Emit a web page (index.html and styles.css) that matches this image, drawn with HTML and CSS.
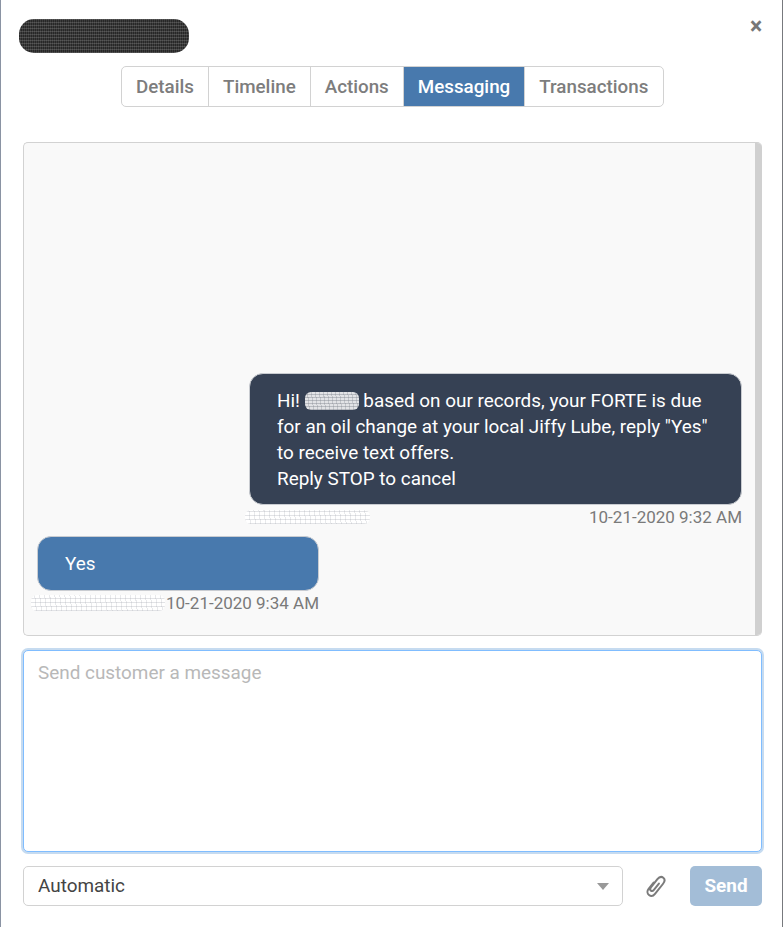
FILE: index.html
```html
<!DOCTYPE html>
<html lang="en">
<head>
    <meta charset="UTF-8">
    <meta name="viewport" content="width=device-width, initial-scale=1.0">
    <title>Messaging</title>
    <link rel="stylesheet" href="styles.css">
</head>
<body>
    <div class="modal">
        <div class="modal-header">
            <div class="name-blob"></div>
            <button class="close-button">&times;</button>
        </div>
        <div class="tabs">
            <a class="tab">Details</a>
            <a class="tab">Timeline</a>
            <a class="tab">Actions</a>
            <a class="tab active">Messaging</a>
            <a class="tab">Transactions</a>
        </div>
        <div class="thread-panel">
            <div class="thread">
                <div class="message outgoing">
                    <div class="bubble bubble-dark">Hi! <span class="smudge smudge-name"></span> based on our records, your FORTE is due for an oil change at your local Jiffy Lube, reply "Yes" to receive text offers.<br>Reply STOP to cancel</div>
                    <div class="message-meta">
                        <span class="smudge smudge-sender"></span>
                        <span>10-21-2020 9:32 AM</span>
                    </div>
                </div>
                <div class="message incoming">
                    <div class="bubble bubble-blue">Yes</div>
                    <div class="message-meta">
                        <span class="smudge smudge-phone"></span>
                        <span>10-21-2020 9:34 AM</span>
                    </div>
                </div>
            </div>
            <div class="scrollbar"></div>
        </div>
        <textarea class="composer" placeholder="Send customer a message"></textarea>
        <div class="composer-actions">
            <div class="select-wrap">
                <select class="send-mode">
                    <option>Automatic</option>
                </select>
                <span class="select-arrow"></span>
            </div>
            <button class="attach-button" aria-label="Attach">
                <svg width="24" height="24" viewBox="0 0 24 24" fill="none" stroke="#7b7b7b" stroke-width="2" stroke-linecap="round">
                    <path d="M9.6 8.6 L4.6 14.8 C2.9 17 3.2 19.6 5 21 C6.8 22.4 9.3 22 11 19.9 L18.9 10 C20.9 7.5 21 5.1 19.3 3.7 C17.6 2.4 15.2 2.9 13.4 5.2 L6.9 13.4 C6 14.6 6 15.9 6.9 16.6 C7.8 17.3 9 17 9.9 15.9 L14.9 9.6"/>
                </svg>
            </button>
            <button class="send-button">Send</button>
        </div>
    </div>
</body>
</html>
```

FILE: styles.css
```css
* {
    box-sizing: border-box;
}

html, body {
    margin: 0;
    height: 100%;
    background: #fff;
    overflow: hidden;
}

body {
    font-family: Roboto, "Liberation Sans", sans-serif;
    font-size: 18.9px;
    color: #444;
}

.modal {
    width: 783px;
    height: 927px;
    padding: 0 20px 0 22px;
    border-left: 1px solid #8a93a3;
    border-right: 1px solid #77797d;
}

.modal-header {
    display: flex;
    justify-content: space-between;
    align-items: flex-start;
    padding-top: 19px;
    height: 66px;
}

.name-blob {
    width: 170px;
    height: 34px;
    margin-left: -4px;
    border-radius: 15px;
    background-color: #3c3c3c;
    background-image:
        repeating-linear-gradient(0deg, rgba(255, 255, 255, 0.14) 0 1px, transparent 1px 3px),
        repeating-linear-gradient(90deg, rgba(0, 0, 0, 0.35) 0 1px, transparent 1px 2px);
}

.close-button {
    margin: -3px -2px 0 0;
    padding: 0;
    width: 16px;
    height: 22px;
    border: 0;
    background: none;
    color: #777;
    font-family: inherit;
    font-size: 23px;
    font-weight: 700;
    line-height: 22px;
}

.tabs {
    display: flex;
    width: 543px;
    height: 41px;
    margin: 0 auto 35px;
    border: 1px solid #d2d2d2;
    border-radius: 5px;
    overflow: hidden;
    font-size: 18.8px;
}

.tab {
    padding: 0 14px;
    line-height: 40px;
    font-weight: 500;
    color: #7d7d7d;
    border-right: 1px solid #d2d2d2;
    white-space: nowrap;
}

.tab:last-child {
    flex: 1;
    border-right: 0;
}

.tab.active {
    background: #4879ad;
    color: #fff;
}

.thread-panel {
    display: flex;
    height: 494px;
    border: 1px solid #d2d2d2;
    border-right: 0;
    border-radius: 5px;
    background: #f9f9f9;
    overflow: hidden;
}

.thread {
    flex: 1;
    display: flex;
    flex-direction: column;
    justify-content: flex-end;
    gap: 7px;
    padding: 0 13px 20px;
}

.scrollbar {
    width: 7px;
    background: #d0d0d0;
}

.message {
    display: flex;
    flex-direction: column;
}

.message.outgoing {
    align-self: flex-end;
    width: 493px;
}

.message.incoming {
    align-self: flex-start;
    width: 282px;
}

.bubble {
    padding: 14px 27px 12px;
    border: 1px solid #c9ccd1;
    border-radius: 14px;
    color: #fff;
    line-height: 26px;
}

.bubble-dark {
    background: #364154;
}

.bubble-blue {
    background: #4879ad;
    padding-bottom: 13px;
}

.message-meta {
    display: flex;
    justify-content: space-between;
    align-items: center;
    height: 24px;
    font-size: 17px;
    color: #7a7a7a;
    white-space: nowrap;
}

.smudge {
    display: inline-block;
    background-color: #fff;
    background-image:
        repeating-linear-gradient(0deg, rgba(150, 155, 165, 0.28) 0 1px, transparent 1px 4px),
        repeating-linear-gradient(83deg, rgba(150, 155, 165, 0.22) 0 1px, transparent 1px 5px);
    border-radius: 6px;
}

.smudge-name {
    width: 54px;
    height: 18px;
    vertical-align: -3px;
    background-color: #e2e3e6;
    background-image:
        repeating-linear-gradient(0deg, rgba(120, 125, 135, 0.4) 0 1px, transparent 1px 3px),
        repeating-linear-gradient(83deg, rgba(120, 125, 135, 0.3) 0 1px, transparent 1px 4px);
}

.smudge-sender {
    width: 125px;
    height: 14px;
    margin-left: -4px;
}

.smudge-phone {
    width: 134px;
    height: 16px;
    margin-left: -6px;
}

.composer {
    display: block;
    width: 739px;
    height: 202px;
    margin-top: 14px;
    padding: 10px 14px;
    border: 1px solid #80bdff;
    border-radius: 5px;
    box-shadow: 0 0 0 2px #c6dbf0;
    outline: 0;
    resize: none;
    font-family: inherit;
    font-size: 18.9px;
    line-height: 24px;
}

.composer::placeholder {
    color: #b8b8b8;
    opacity: 1;
}

.composer-actions {
    display: flex;
    align-items: center;
    height: 40px;
    margin-top: 14px;
}

.select-wrap {
    position: relative;
    width: 600px;
    height: 40px;
}

.send-mode {
    width: 100%;
    height: 100%;
    padding: 0 14px 2px;
    border: 1px solid #d2d2d2;
    border-radius: 5px;
    background: #fff;
    appearance: none;
    font-family: inherit;
    font-size: 18.9px;
    color: #444;
}

.select-arrow {
    position: absolute;
    top: 17px;
    right: 14px;
    width: 0;
    height: 0;
    border-left: 6px solid transparent;
    border-right: 6px solid transparent;
    border-top: 7px solid #999;
}

.attach-button {
    width: 24px;
    height: 24px;
    margin: 0 22px 0 21px;
    padding: 0;
    border: 0;
    background: none;
}

.send-button {
    width: 72px;
    height: 40px;
    padding: 0 0 2px;
    border: 0;
    border-radius: 5px;
    background: #a3bdd7;
    color: #fff;
    font-family: inherit;
    font-size: 18.9px;
    font-weight: 700;
}
```
